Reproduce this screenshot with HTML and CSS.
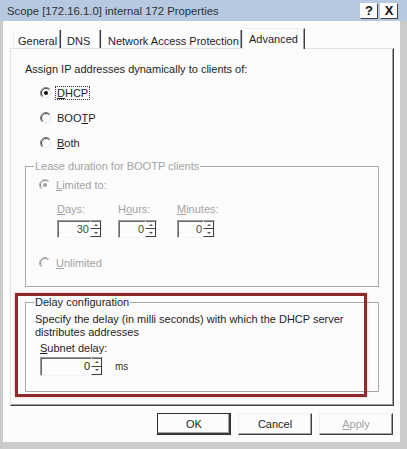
FILE: index.html
```html
<!DOCTYPE html>
<html lang="en">
  <head>
    <meta charset="UTF-8" />
    <title>Scope Properties</title>
    <link rel="stylesheet" href="styles.css">
  </head>
  <body>
    <div class="window">
      <div class="titlebar">
        <span class="title">Scope [172.16.1.0] internal 172 Properties</span>
        <div class="caption-buttons">
          <span class="cap-btn">?</span>
          <span class="cap-btn">X</span>
        </div>
      </div>

      <div class="client">
        <div class="tabs">
          <div class="tab tab-general">General</div>
          <div class="tab tab-dns">DNS</div>
          <div class="tab tab-nap">Network Access Protection</div>
          <div class="tab tab-advanced active">Advanced</div>
        </div>

        <div class="panel">
          <div class="lead">Assign IP addresses dynamically to clients of:</div>
          <div class="radio-list">
            <div class="radio-row">
              <svg class="radio" viewBox="0 0 12 12"><circle cx="6" cy="6" r="5" fill="#fff"/><path d="M2.1 9.9A5.5 5.5 0 0 1 9.9 2.1" fill="none" stroke="#808080"/><path d="M2.8 9.2A4.5 4.5 0 0 1 9.2 2.8" fill="none" stroke="#404040"/><path d="M9.2 2.8A4.5 4.5 0 0 1 2.8 9.2" fill="none" stroke="#e4e4e4"/><circle cx="6" cy="6" r="2" fill="#111"/></svg>
              <span class="focus"><u>D</u>HCP</span>
            </div>
            <div class="radio-row">
              <svg class="radio" viewBox="0 0 12 12"><circle cx="6" cy="6" r="5" fill="#fff"/><path d="M2.1 9.9A5.5 5.5 0 0 1 9.9 2.1" fill="none" stroke="#808080"/><path d="M2.8 9.2A4.5 4.5 0 0 1 9.2 2.8" fill="none" stroke="#404040"/><path d="M9.2 2.8A4.5 4.5 0 0 1 2.8 9.2" fill="none" stroke="#e4e4e4"/></svg>
              <span>BOO<u>T</u>P</span>
            </div>
            <div class="radio-row">
              <svg class="radio" viewBox="0 0 12 12"><circle cx="6" cy="6" r="5" fill="#fff"/><path d="M2.1 9.9A5.5 5.5 0 0 1 9.9 2.1" fill="none" stroke="#808080"/><path d="M2.8 9.2A4.5 4.5 0 0 1 9.2 2.8" fill="none" stroke="#404040"/><path d="M9.2 2.8A4.5 4.5 0 0 1 2.8 9.2" fill="none" stroke="#e4e4e4"/></svg>
              <span><u>B</u>oth</span>
            </div>
          </div>

          <fieldset class="group group-lease disabled">
            <legend>Lease duration for BOOTP clients</legend>
            <div class="group-body">
              <div class="radio-row short">
                <svg class="radio" viewBox="0 0 12 12"><circle cx="6" cy="6" r="5" fill="#fff"/><path d="M2.1 9.9A5.5 5.5 0 0 1 9.9 2.1" fill="none" stroke="#b4b4b4"/><path d="M2.8 9.2A4.5 4.5 0 0 1 9.2 2.8" fill="none" stroke="#8c8c8c"/><circle cx="6" cy="6" r="2" fill="#a0a0a0"/></svg>
                <span><u>L</u>imited to:</span>
              </div>
              <div class="duration">
                <div class="field field-days">
                  <div class="field-label"><u>D</u>ays:</div>
                  <div class="spin spin-days">
                    <span class="spin-value">30</span>
                    <span class="spin-arrows"><span class="up"></span><span class="down"></span></span>
                  </div>
                </div>
                <div class="field field-hours">
                  <div class="field-label">H<u>o</u>urs:</div>
                  <div class="spin spin-hours">
                    <span class="spin-value">0</span>
                    <span class="spin-arrows"><span class="up"></span><span class="down"></span></span>
                  </div>
                </div>
                <div class="field field-minutes">
                  <div class="field-label"><u>M</u>inutes:</div>
                  <div class="spin spin-minutes">
                    <span class="spin-value">0</span>
                    <span class="spin-arrows"><span class="up"></span><span class="down"></span></span>
                  </div>
                </div>
              </div>
              <div class="radio-row short unlimited">
                <svg class="radio" viewBox="0 0 12 12"><circle cx="6" cy="6" r="5" fill="#fff"/><path d="M2.1 9.9A5.5 5.5 0 0 1 9.9 2.1" fill="none" stroke="#b4b4b4"/><path d="M2.8 9.2A4.5 4.5 0 0 1 9.2 2.8" fill="none" stroke="#8c8c8c"/></svg>
                <span><u>U</u>nlimited</span>
              </div>
            </div>
          </fieldset>

          <fieldset class="group group-delay">
            <legend>Delay configuration</legend>
            <div class="group-body">
              <div class="note">Specify the delay (in milli seconds) with which the DHCP server<br>distributes addresses</div>
              <div class="field-label subnet-label"><u>S</u>ubnet delay:</div>
              <div class="subnet-row">
                <div class="spin spin-subnet">
                  <span class="spin-value">0</span>
                  <span class="spin-arrows"><span class="up"></span><span class="down"></span></span>
                </div>
                <span class="unit">ms</span>
              </div>
            </div>
          </fieldset>
        </div>

        <div class="buttons">
          <div class="btn default">OK</div>
          <div class="btn">Cancel</div>
          <div class="btn disabled"><u>A</u>pply</div>
        </div>
      </div>

      <div class="highlight"></div>
    </div>
  </body>
</html>
```

FILE: styles.css
```css
body {
  margin: 0;
  font-family: "Liberation Sans", Arial, sans-serif;
  font-size: 11px;
  color: #1e1e1e;
}

.window {
  position: relative;
  width: 407px;
  height: 449px;
  background-color: #cbcbcb;
  display: flex;
  flex-direction: column;
  overflow: hidden;
}

.titlebar {
  height: 21px;
  flex-shrink: 0;
  background-color: #b6c9e1;
  display: flex;
  align-items: center;
  padding-left: 7px;
}

.title {
  flex: 1;
  font-size: 11.3px;
  color: #303030;
}

.caption-buttons {
  display: flex;
  gap: 2px;
  margin-right: 9px;
}

.cap-btn {
  width: 18px;
  height: 16px;
  box-sizing: border-box;
  background-color: #fbfbfb;
  border: 1px solid;
  border-color: #ffffff #404040 #404040 #ffffff;
  font-weight: bold;
  font-size: 13px;
  line-height: 14px;
  text-align: center;
  color: #111;
}

.client {
  flex: 1;
  margin: 0 7px 7px 3px;
  padding: 7px 6px 0 7px;
  background-color: #fdfcfc;
  display: flex;
  flex-direction: column;
}

.tabs {
  height: 20px;
  flex-shrink: 0;
  display: flex;
  align-items: flex-end;
  padding-left: 3px;
  position: relative;
  z-index: 1;
}

.tab {
  height: 18px;
  box-sizing: border-box;
  padding-top: 4px;
  line-height: 14px;
  white-space: nowrap;
  border-left: 1px solid #ececec;
  border-right: 1px solid #404040;
  box-shadow: inset -1px 0 0 #a0a0a0;
}

.tab-general {
  width: 48px;
  padding-left: 4px;
}

.tab-dns {
  width: 40px;
  padding-left: 5px;
}

.tab-nap {
  width: 141px;
  padding-left: 6px;
}

.tab.active {
  width: 63px;
  height: 21px;
  margin-bottom: -1px;
  padding-left: 6px;
  background-color: #fdfcfc;
  border-top: 1px solid #ececec;
  padding-top: 3px;
}

.panel {
  flex: 1;
  box-sizing: border-box;
  border: 1px solid;
  border-color: #e3e3e3 #404040 #404040 #e3e3e3;
  box-shadow: inset -1px -1px 0 #a0a0a0;
  padding: 13px 14px 0 14px;
}

.lead {
  line-height: 14px;
}

.radio-list {
  margin-top: 4px;
  margin-left: 15px;
}

.radio-row {
  display: flex;
  align-items: center;
  height: 25px;
}

.radio-row.short {
  height: 20px;
}

.radio {
  width: 12px;
  height: 12px;
  margin-right: 5px;
  flex-shrink: 0;
}

.focus {
  border: 1px dotted #333;
  padding: 0 1px;
  margin-left: -2px;
  line-height: 12px;
}

.group {
  margin: 5px 0 0;
  padding: 0;
  min-width: 0;
  border: 1px solid #a9a9a9;
}

.group legend {
  margin-left: 8px;
  padding: 0 1px;
  line-height: 13px;
}

.disabled,
.disabled legend {
  color: #a3a3a3;
}

.group-lease .group-body {
  padding: 2px 12px 13px 13px;
}

.duration {
  display: flex;
  margin: 8px 0 0 18px;
}

.field-label {
  line-height: 13px;
  margin-bottom: 4px;
}

.field-days {
  width: 61px;
}

.field-hours {
  width: 59px;
}

.spin {
  display: flex;
  height: 18px;
  box-sizing: border-box;
  border: 1px solid;
  border-color: #9a9a9a #f4f4f4 #f4f4f4 #9a9a9a;
  box-shadow: inset 1px 1px 0 #6a6a6a;
  background-color: #fdfcfc;
}

.spin-days {
  width: 45px;
}

.spin-hours {
  width: 39px;
}

.spin-minutes {
  width: 38px;
}

.spin-value {
  flex: 1;
  text-align: right;
  line-height: 16px;
  padding-right: 1px;
  color: #4a4a4a;
}

.spin-arrows {
  width: 11px;
  display: flex;
  flex-direction: column;
}

.spin-arrows span {
  flex: 1;
  box-sizing: border-box;
  border-left: 1px solid #ffffff;
  border-right: 1px solid #404040;
  border-bottom: 1px solid #404040;
  display: flex;
  align-items: center;
  justify-content: center;
}

.spin-arrows .up::before,
.spin-arrows .down::before {
  content: "";
  border-left: 2px solid transparent;
  border-right: 2px solid transparent;
}

.spin-arrows .up::before {
  border-bottom: 2px solid #555;
}

.spin-arrows .down::before {
  border-top: 2px solid #555;
}

.unlimited {
  margin-top: 15px;
}

.group-delay {
  margin-top: 9px;
}

.group-delay .group-body {
  padding: 4px 10px 15px 9px;
}

.note {
  line-height: 13px;
}

.subnet-label {
  margin: 3px 0 2px 5px;
}

.subnet-row {
  display: flex;
  align-items: center;
  margin-left: 5px;
}

.spin-subnet {
  width: 63px;
  height: 19px;
}

.spin-subnet .spin-value {
  color: #1e1e1e;
  line-height: 17px;
}

.unit {
  margin-left: 12px;
  font-size: 10px;
  color: #333;
}

.buttons {
  height: 36px;
  flex-shrink: 0;
  display: flex;
  justify-content: flex-end;
  align-items: center;
  gap: 7px;
  padding-right: 1px;
}

.btn {
  width: 74px;
  height: 22px;
  box-sizing: border-box;
  border: 1px solid;
  border-color: #f0f0f0 #404040 #404040 #f0f0f0;
  box-shadow: inset -1px -1px 0 #a0a0a0;
  background-color: #fdfcfc;
  text-align: center;
  line-height: 20px;
}

.btn.default {
  border-color: #303030;
  box-shadow: inset -1px -1px 0 #404040, inset -2px -2px 0 #a0a0a0;
}

.highlight {
  position: absolute;
  left: 15px;
  top: 293px;
  width: 352px;
  height: 104px;
  box-sizing: border-box;
  border: 3px solid #8e2a2c;
  box-shadow: 0 0 2px rgba(190, 80, 80, 0.5);
  pointer-events: none;
}
```
